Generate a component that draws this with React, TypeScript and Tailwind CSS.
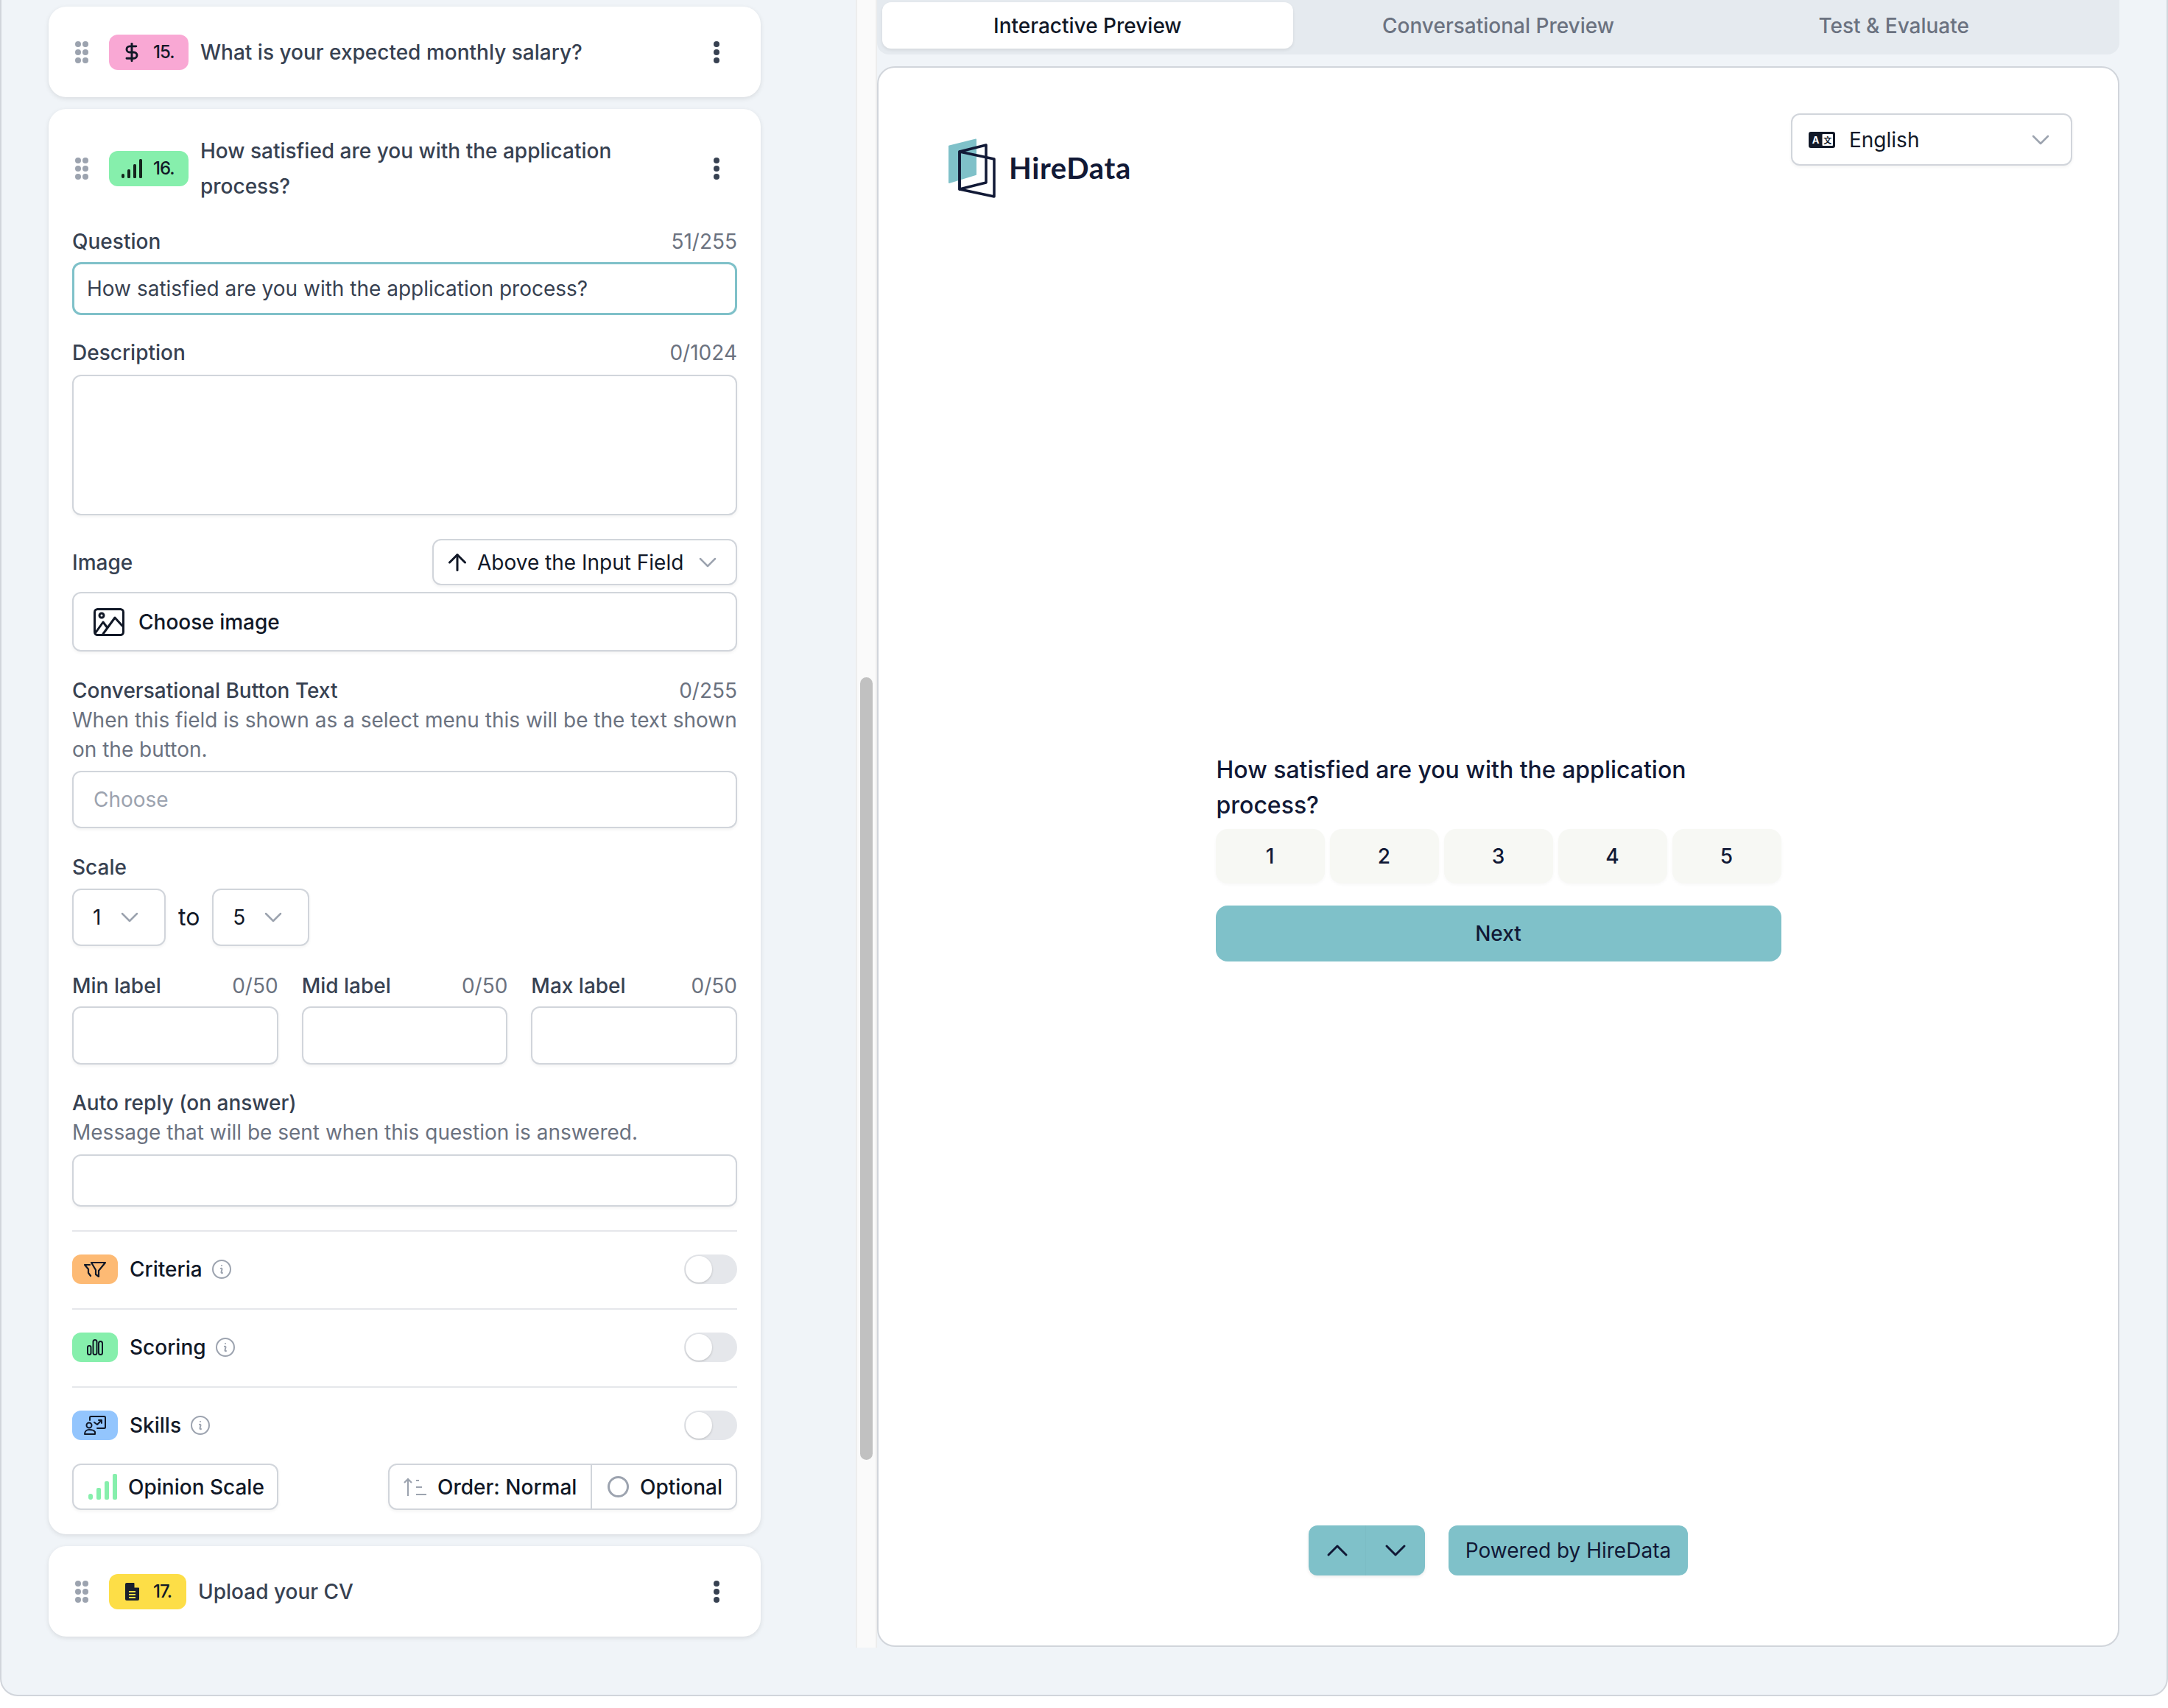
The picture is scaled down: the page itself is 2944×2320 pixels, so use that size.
import type { ReactNode } from 'react';
import { ArrowUp, ChevronDown, ChevronUp, DollarSign } from 'lucide-react';

const fieldBox = 'rounded-xl border-2 border-[#d1d5db] bg-white shadow-[0_2px_4px_rgba(0,0,0,0.05)]';

function DragDots() {
  return (
    <svg width="18" height="30" viewBox="0 0 18 30" className="shrink-0 fill-[#9ca3af]">
      {[4, 15, 26].map((y) => (
        <g key={y}>
          <circle cx="4" cy={y} r="4" />
          <circle cx="14" cy={y} r="4" />
        </g>
      ))}
    </svg>
  );
}

function Kebab() {
  return (
    <svg width="10" height="30" viewBox="0 0 10 30" className="shrink-0 fill-[#374151]">
      <circle cx="5" cy="4" r="4" />
      <circle cx="5" cy="15" r="4" />
      <circle cx="5" cy="26" r="4" />
    </svg>
  );
}

function SignalIcon() {
  return (
    <svg width="28" height="26" viewBox="0 0 28 26" className="fill-[#14241c]">
      <rect x="0" y="20" width="4" height="6" rx="2" />
      <rect x="8" y="14" width="4" height="12" rx="1.5" />
      <rect x="16" y="7" width="4" height="19" rx="1.5" />
      <rect x="24" y="0" width="4" height="26" rx="1.5" />
    </svg>
  );
}

function DocIcon() {
  return (
    <svg width="19" height="24" viewBox="0 0 19 24">
      <path d="M2 0h10l7 7v15a2 2 0 0 1-2 2H2a2 2 0 0 1-2-2V2a2 2 0 0 1 2-2z" fill="#1a1f2c" />
      <path d="M12.5 0v6.5H19" fill="#fdde47" />
      <rect x="5" y="11" width="9" height="2" fill="#fdde47" />
      <rect x="5" y="15" width="9" height="2" fill="#fdde47" />
      <rect x="5" y="19" width="9" height="2" fill="#fdde47" />
    </svg>
  );
}

function QuestionHeader({ color, icon, num, title }: { color: string; icon: ReactNode; num: string; title: ReactNode }) {
  return (
    <div className="flex items-center pl-1 pr-[23px]">
      <DragDots />
      <div className={`ml-[28px] flex h-12 shrink-0 items-center rounded-xl pl-[15px] ${color}`}>
        <span className="flex w-8 justify-center">{icon}</span>
        <span className="ml-[13px] text-[24px] font-medium tracking-[-1px] text-[#111827]">{num}</span>
      </div>
      <div className="ml-4 mr-[24px] flex-1 text-[28px] font-medium leading-[48px] text-[#374151]">{title}</div>
      <Kebab />
    </div>
  );
}

function CollapsedCard({ color, icon, num, title }: { color: string; icon: ReactNode; num: string; title: string }) {
  return (
    <div className="h-[123px] shrink-0 rounded-3xl bg-white px-8 pt-[38px] shadow-[0_2px_6px_rgba(0,0,0,0.1)]">
      <QuestionHeader color={color} icon={icon} num={num} title={title} />
    </div>
  );
}

function LabelRow({ label, count, className = '' }: { label: string; count?: string; className?: string }) {
  return (
    <div className={`flex h-10 items-center justify-between text-[28px] ${className}`}>
      <span className="font-medium text-[#374151]">{label}</span>
      {count && <span className="text-[#6b7280]">{count}</span>}
    </div>
  );
}

function GrayChevron({ className = '' }: { className?: string }) {
  return <ChevronDown size={40} strokeWidth={1.5} className={`shrink-0 text-[#9ca3af] ${className}`} />;
}

function ScaleSelect({ value, width, valueWidth }: { value: string; width: string; valueWidth: string }) {
  return (
    <div className={`${fieldBox} flex h-[78px] items-center pl-[26px] ${width}`}>
      <span className={`${valueWidth} text-[28px] text-[#111827]`}>{value}</span>
      <GrayChevron className="ml-[8px]" />
    </div>
  );
}

function InfoIcon() {
  return (
    <svg width="32" height="32" viewBox="0 0 24 24" fill="none" stroke="#9ca3af" strokeWidth="1.5" strokeLinecap="round" strokeLinejoin="round">
      <path d="m11.25 11.25.041-.02a.75.75 0 0 1 1.063.852l-.708 2.836a.75.75 0 0 0 1.063.853l.041-.021M21 12a9 9 0 1 1-18 0 9 9 0 0 1 18 0Zm-9-3.75h.008v.008H12V8.25Z" />
    </svg>
  );
}

function ToggleRow({ color, icon, label }: { color: string; icon: ReactNode; label: string }) {
  return (
    <div className="flex h-[40px] items-center">
      <div className={`flex h-10 w-[62px] items-center justify-center rounded-xl ${color}`}>{icon}</div>
      <span className="ml-4 text-[28px] font-medium text-[#111827]">{label}</span>
      <span className="ml-[10px] flex"><InfoIcon /></span>
      <div className="ml-auto flex h-10 w-[72px] items-center rounded-full bg-[#e5e7eb] p-[2px]">
        <div className="h-9 w-9 rounded-full bg-white shadow-[0_1px_3px_rgba(0,0,0,0.2)]" />
      </div>
    </div>
  );
}

function EditorCard() {
  return (
    <div className="shrink-0 rounded-3xl bg-white px-8 pb-[33px] pt-[33px] shadow-[0_2px_6px_rgba(0,0,0,0.1)]">
      <QuestionHeader
        color="w-[108px] bg-[#86efac]"
        icon={<SignalIcon />}
        num="16."
        title="How satisfied are you with the application process?"
      />

      <LabelRow label="Question" count="51/255" className="mt-[31px]" />
      <div className="mt-2 flex h-[72px] items-center rounded-xl border-[3px] border-[#7fc1c9] bg-white pl-[17px] text-[28px] text-[#374151]">
        How satisfied are you with the application process?
      </div>

      <LabelRow label="Description" count="0/1024" className="mt-[31px]" />
      <div className={`${fieldBox} mt-[10px] h-[191px]`} />

      <div className="mt-[32px] flex h-[63px] items-center justify-between">
        <span className="text-[28px] font-medium text-[#374151]">Image</span>
        <div className={`${fieldBox} flex h-[63px] w-[414px] items-center pl-[14px] text-[28px] text-[#111827]`}>
          <ArrowUp size={36} strokeWidth={2} className="shrink-0 text-[#111827]" />
          <span className="ml-[9px]">Above the Input Field</span>
          <GrayChevron className="ml-[13px]" />
        </div>
      </div>

      <div className={`${fieldBox} mt-[9px] flex h-[81px] items-center pl-[27px]`}>
        <svg width="42" height="38" viewBox="0 0 42 38" fill="none" stroke="#111827" strokeWidth="3" strokeLinejoin="round" strokeLinecap="round">
          <rect x="1.5" y="1.5" width="39" height="35" rx="4" />
          <circle cx="11" cy="10" r="3" />
          <path d="M3 33l10-14 6 8M13 35l16-22 10 11" />
        </svg>
        <span className="ml-[19px] text-[28px] font-medium text-[#111827]">Choose image</span>
      </div>

      <LabelRow label="Conversational Button Text" count="0/255" className="mt-[33px]" />
      <p className="text-[28px] leading-[40px] text-[#6b7280]">
        When this field is shown as a select menu this will be the text shown on the button.
      </p>
      <div className={`${fieldBox} mt-[9px] flex h-[78px] items-center pl-[27px] text-[28px] text-[#9ca3af]`}>Choose</div>

      <LabelRow label="Scale" className="mt-[33px]" />
      <div className="mt-[9px] flex items-center">
        <ScaleSelect value="1" width="w-[127px]" valueWidth="w-[22px]" />
        <span className="ml-[17px] text-[32px] text-[#111827]">to</span>
        <div className="ml-[17px]">
          <ScaleSelect value="5" width="w-[132px]" valueWidth="w-[27px]" />
        </div>
      </div>

      <div className="mt-[34px] grid grid-cols-3 gap-x-[32px]">
        {['Min label', 'Mid label', 'Max label'].map((label) => (
          <div key={label}>
            <LabelRow label={label} count="0/50" />
            <div className={`${fieldBox} mt-2 h-[79px]`} />
          </div>
        ))}
      </div>

      <LabelRow label="Auto reply (on answer)" className="mt-[32px]" />
      <p className="text-[28px] leading-[40px] text-[#6b7280]">Message that will be sent when this question is answered.</p>
      <div className={`${fieldBox} mt-[10px] h-[71px]`} />

      <div className="mt-[32px] border-t-2 border-[#e5e7eb] pb-[33px] pt-[31px]">
        <ToggleRow
          color="bg-[#fdba74]"
          label="Criteria"
          icon={
            <svg width="30" height="22" viewBox="0 0 30 22" fill="none" stroke="#111827" strokeWidth="2.2" strokeLinejoin="round" strokeLinecap="round">
              <path d="M10 2h19l-9 11v8l-4-3v-6z" />
              <path d="M1 5h7M1 5l5 6v5l3 4" />
            </svg>
          }
        />
      </div>
      <div className="border-t-2 border-[#e5e7eb] pb-[33px] pt-[31px]">
        <ToggleRow
          color="bg-[#86efac]"
          label="Scoring"
          icon={
            <svg width="22" height="22" viewBox="0 0 22 22" fill="none" stroke="#111827" strokeWidth="2">
              <rect x="1" y="9" width="4.5" height="12" rx="2.2" />
              <rect x="8.5" y="1" width="5" height="20" rx="2.5" />
              <rect x="16" y="3" width="5" height="18" rx="2.5" />
            </svg>
          }
        />
      </div>
      <div className="border-t-2 border-[#e5e7eb] pt-[31px]">
        <ToggleRow
          color="bg-[#93c5fd]"
          label="Skills"
          icon={
            <svg width="30" height="26" viewBox="0 0 30 26" fill="none" stroke="#111827" strokeWidth="2" strokeLinecap="round" strokeLinejoin="round">
              <path d="M8 6V2.5A1.5 1.5 0 0 1 9.5 1h18A1.5 1.5 0 0 1 29 2.5v13a1.5 1.5 0 0 1-1.5 1.5H18" />
              <path d="M14 9l4 3 6-6M20 6h4v4" />
              <circle cx="7" cy="13" r="3.5" />
              <path d="M1 25c0-4 3-6 6-6s7 1 8 3v3z" />
            </svg>
          }
        />
      </div>

      <div className="mt-[32px] flex items-center justify-between text-[28px] font-medium text-[#111827]">
        <div className={`${fieldBox} flex h-[63px] w-[280px] items-center pl-[20px]`}>
          <svg width="40" height="36" viewBox="0 0 40 36" className="fill-[#86efac]">
            <rect x="0" y="27" width="6" height="8" rx="3" />
            <rect x="11" y="19" width="6" height="16" rx="2" />
            <rect x="22" y="10" width="6" height="25" rx="2" />
            <rect x="33" y="0" width="6" height="35" rx="2" />
          </svg>
          <span className="ml-[14px]">Opinion Scale</span>
        </div>
        <div className={`${fieldBox} flex h-[63px] w-[474px] items-center`}>
          <div className="flex h-full w-[275px] items-center border-r-2 border-[#d1d5db] pl-[19px]">
            <svg width="32" height="26" viewBox="0 0 32 26" fill="none" stroke="#9ca3af" strokeWidth="2.2">
              <path d="M6 25V2M1 7l5-5 5 5M17 4h4M17 13h8M17 23h14" />
            </svg>
            <span className="ml-[14px]">Order: Normal</span>
          </div>
          <div className="ml-[21px] h-[29px] w-[29px] shrink-0 rounded-full border-[3px] border-[#9ca3af]" />
          <span className="ml-[15px]">Optional</span>
        </div>
      </div>
    </div>
  );
}

function Logo() {
  return (
    <div className="flex items-start">
      <svg width="64" height="81" viewBox="0 0 64 81" fill="none">
        <path d="M1 9.5L37 .6a1 1 0 0 1 1 1V49a1 1 0 0 1-1 1L1 61a1 1 0 0 1-1-1V10z" fill="#7fc1c9" />
        <path d="M15 18l36-9v51l-36 9z" stroke="#111936" strokeWidth="3.5" strokeLinejoin="round" />
        <path d="M15 18l47 10v51l-47-10z" stroke="#111936" strokeWidth="3.5" strokeLinejoin="round" />
      </svg>
      <span className="ml-[18px] mt-[14px] font-[Lato,sans-serif] text-[40px] font-bold leading-[52px] tracking-[0.6px] text-[#111936]">HireData</span>
    </div>
  );
}

function Preview() {
  return (
    <div className="flex w-[1687px] shrink-0 flex-col">
      <div className="grid h-[74px] shrink-0 grid-cols-3 gap-0 rounded-b-2xl bg-[#e5eaef] px-[7px] pb-2 pt-[3px] text-[28px] font-medium text-[#6b7280]">
        <div className="flex items-center justify-center rounded-xl bg-white text-[#111827] shadow-[0_2px_4px_rgba(0,0,0,0.08)]">Interactive Preview</div>
        <div className="flex items-center justify-center">Conversational Preview</div>
        <div className="flex items-center justify-center pr-[41px]">Test &amp; Evaluate</div>
      </div>

      <div className="mt-4 flex h-[2147px] flex-col rounded-3xl border-2 border-[#d1d5db] bg-white">
        <div className="flex h-[260px] shrink-0 items-start justify-between pl-[95px] pr-[62px] pt-[62px]">
          <div className="pt-[34px]">
            <Logo />
          </div>
          <div className={`${fieldBox} flex h-[71px] w-[382px] items-center pl-[22px] text-[28px] text-[#111827]`}>
            <svg width="36" height="22" viewBox="0 0 36 22">
              <rect width="36" height="22" rx="3" fill="#111827" />
              <rect x="18.5" y="3" width="14.5" height="16" rx="1" fill="#fff" />
              <text x="9.5" y="16" textAnchor="middle" fontSize="13" fontWeight="700" fontFamily="Inter, sans-serif" fill="#fff">A</text>
              <text x="25.7" y="15.5" textAnchor="middle" fontSize="11" fontWeight="700" fontFamily="'Noto Sans CJK SC', sans-serif" fill="#111827">文</text>
            </svg>
            <span className="ml-[19px]">English</span>
            <GrayChevron className="ml-auto mr-[21px]" />
          </div>
        </div>

        <div className="flex flex-1 items-center justify-center">
          <div className="w-[768px]">
            <div className="pl-px text-[32px] font-medium leading-[48px] text-[#111936]">
              How satisfied are you with the application process?
            </div>
            <div className="mt-2 grid grid-cols-5 gap-[7px]">
              {[1, 2, 3, 4, 5].map((n) => (
                <div key={n} className="flex h-[74px] items-center justify-center rounded-2xl bg-[#f7f8f4] text-[28px] font-medium text-[#111936] shadow-[0_2px_4px_rgba(0,0,0,0.03)]">
                  {n}
                </div>
              ))}
            </div>
            <div className="mt-[30px] flex h-[76px] items-center justify-center rounded-2xl bg-[#7fc1c9] text-[28px] font-medium text-[#111936]">Next</div>
          </div>
        </div>

        <div className="flex h-[260px] shrink-0 items-end justify-center gap-[32px] pb-[95px]">
          <div className="flex h-[68px] w-[158px] rounded-xl bg-[#7fc1c9] text-[#111936] shadow-[0_2px_4px_rgba(0,0,0,0.08)]">
            <div className="flex w-[78px] items-center justify-center border-r border-[#7cbcc4]">
              <ChevronUp size={48} strokeWidth={1.5} />
            </div>
            <div className="flex flex-1 items-center justify-center">
              <ChevronDown size={48} strokeWidth={1.5} />
            </div>
          </div>
          <div className="flex h-[68px] w-[325px] items-center justify-center rounded-xl bg-[#7fc1c9] text-[28px] text-[#111936]">Powered by HireData</div>
        </div>
      </div>
    </div>
  );
}

export default function App() {
  return (
    <div className="h-[2320px] w-[2944px] overflow-hidden bg-white font-[Inter,sans-serif]">
      <div className="flex h-[2304px] rounded-b-3xl border-x-2 border-b-2 border-[#d1d5db] bg-[#f0f4f8]">
        <div className="flex h-[2238px] w-[1160px] shrink-0 flex-col gap-4 overflow-hidden pl-16 pr-[129px] pt-[9px]">
          <CollapsedCard
            color="w-[108px] bg-[#f9a8d4]"
            icon={<DollarSign size={28} strokeWidth={2.5} className="text-[#111827]" />}
            num="15."
            title="What is your expected monthly salary?"
          />
          <EditorCard />
          <CollapsedCard color="w-[105px] bg-[#fdde47]" icon={<DocIcon />} num="17." title="Upload your CV" />
        </div>

        <div className="h-[2238px] w-[29px] shrink-0 border-x-2 border-[#ededed] bg-[#fafafa] px-1 pt-[920px]">
          <div className="h-[1063px] rounded-full bg-[#c1c1c1]" />
        </div>

        <Preview />
      </div>
    </div>
  );
}
